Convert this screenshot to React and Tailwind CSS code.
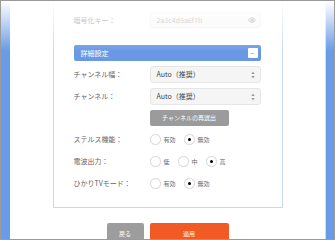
import { Eye } from "lucide-react";

const font = { fontFamily: '"Noto Sans CJK JP", "Noto Sans", sans-serif' };

function Radio({ label, checked }) {
    return (
        <div className="flex items-center mr-[8px]">
            <span className="w-[11px] h-[11px] rounded-full border border-[#d9d9d9] bg-white flex items-center justify-center shadow-[0_0_1px_rgba(0,0,0,0.08)]">
                {checked && <span className="w-[3px] h-[3px] rounded-full bg-black" />}
            </span>
            <span className="ml-[3px] text-[6px] leading-none text-[#666]">{label}</span>
        </div>
    );
}

function Row({ label, children, className = "" }) {
    return (
        <div className={`flex items-center ${className}`}>
            <div className="w-[76px] text-[7px] text-[#666] leading-none">{label}</div>
            <div className="flex-1 flex items-center h-full">{children}</div>
        </div>
    );
}

function SelectBox({ value }) {
    return (
        <div className="w-full h-full flex items-center justify-between bg-[#f5f5f5] border border-[#e6e6e6] rounded-[3px] pl-[6px] pr-[5px]">
            <span className="text-[7px] text-[#444] leading-none">{value}</span>
            <svg width="4" height="8" viewBox="0 0 4 8" className="text-[#999]">
                <path d="M2 0.5 L3.6 3 L0.4 3 Z" fill="currentColor" />
                <path d="M2 7.5 L3.6 5 L0.4 5 Z" fill="currentColor" />
            </svg>
        </div>
    );
}

export default function App() {
    return (
        <div
            className="w-[335px] h-[240px] border border-[#9a9a9a] bg-[#6a9be7] overflow-hidden relative flex"
            style={font}
        >
            <div className="w-[9px]" />
            <div className="w-[316px] bg-white border-r border-[#cfdcf3] flex flex-col">
                <div className="w-[230px] mx-auto border-x border-b border-[#c9d7f2] pt-[11px] pb-[18px] pl-[20px] pr-[21px] flex flex-col">
                    <Row label="暗号化キー：" className="h-[16px]">
                        <div className="w-full h-full flex items-center justify-between bg-[#f7f7f7] border border-[#ececec] rounded-[3px] pl-[6px] pr-[4px]">
                            <span className="text-[7px] text-[#999] leading-none">2a3c4d5a6f7h</span>
                            <Eye size={8} className="text-[#777]" strokeWidth={2.5} />
                        </div>
                    </Row>

                    <div className="mt-[17px] h-[16px] bg-[#6a98e4] rounded-[2px] flex items-center justify-between pl-[7px] pr-[3px]">
                        <span className="text-[7px] text-white leading-none">詳細設定</span>
                        <span className="w-[10px] h-[10px] bg-white rounded-[1px] flex items-center justify-center text-[#888] text-[7px] leading-none">−</span>
                    </div>

                    <Row label="チャンネル幅：" className="mt-[5px] h-[17px]">
                        <SelectBox value="Auto（推奨）" />
                    </Row>
                    <Row label="チャンネル：" className="mt-[5px] h-[17px]">
                        <SelectBox value="Auto（推奨）" />
                    </Row>
                    <Row label="" className="mt-[5px] h-[16px]">
                        <div className="w-[79px] h-full bg-[#9b9b9b] rounded-[2px] flex items-center justify-center text-[6px] text-white leading-none">
                            チャンネルの再選出
                        </div>
                    </Row>

                    <Row label="ステルス機能：" className="mt-[8px] h-[11px]">
                        <Radio label="有効" />
                        <Radio label="無効" checked />
                    </Row>
                    <Row label="電波出力：" className="mt-[11px] h-[11px]">
                        <Radio label="低" />
                        <Radio label="中" />
                        <Radio label="高" checked />
                    </Row>
                    <Row label="ひかりTVモード：" className="mt-[11px] h-[11px]">
                        <Radio label="有効" />
                        <Radio label="無効" checked />
                    </Row>
                </div>

                <div className="mt-[15px] flex justify-center gap-[6px]">
                    <div className="w-[37px] h-[20px] bg-[#9d9d9d] rounded-[2px] flex items-center justify-center text-[6px] text-white">
                        戻る
                    </div>
                    <div className="w-[79px] h-[20px] bg-[#f15a24] rounded-[2px] flex items-center justify-center text-[6px] text-white">
                        適用
                    </div>
                </div>
            </div>
            <div className="flex-1" />

            <div className="absolute inset-x-0 top-0 h-[50px] bg-linear-to-b from-white to-transparent pointer-events-none" />
        </div>
    );
}
